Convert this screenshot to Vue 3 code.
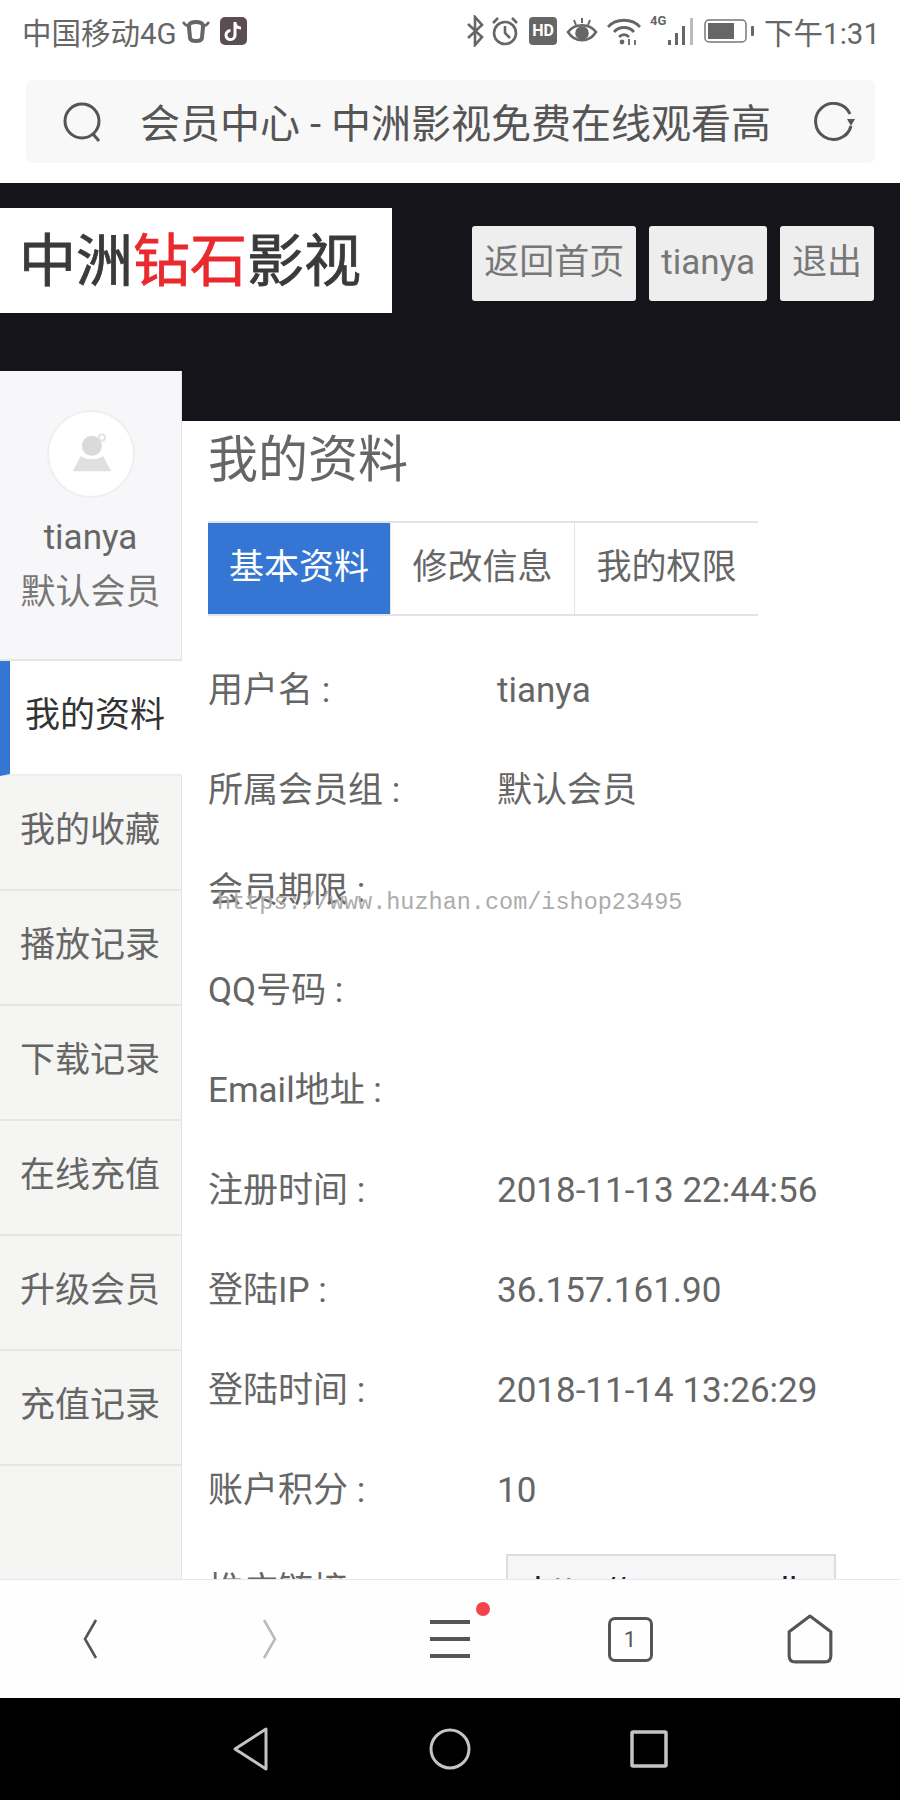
<script setup>
const menu = [
  { name: '我的资料', active: true },
  { name: '我的收藏' },
  { name: '播放记录' },
  { name: '下载记录' },
  { name: '在线充值' },
  { name: '升级会员' },
  { name: '充值记录' },
]
const tabs = ['基本资料', '修改信息', '我的权限']
const rows = [
  { label: '用户名 :', value: 'tianya' },
  { label: '所属会员组 :', value: '默认会员' },
  { label: '会员期限 :', value: '' },
  { label: 'QQ号码 :', value: '' },
  { label: 'Email地址 :', value: '' },
  { label: '注册时间 :', value: '2018-11-13 22:44:56' },
  { label: '登陆IP :', value: '36.157.161.90' },
  { label: '登陆时间 :', value: '2018-11-14 13:26:29' },
  { label: '账户积分 :', value: '10' },
]
</script>

<template>
  <div class="phone">
    <div class="status">
      <div class="status-left">
        <span>中国移动4G</span>
        <svg class="ic-cow" width="28" height="28" viewBox="0 0 28 28" fill="none" stroke="#666" stroke-width="4">
          <path d="M7 8 C9 4 19 4 21 8 C21 14 20 18 20 21 C19 25 9 25 8 21 C8 18 7 14 7 8 Z" />
          <path d="M1 5 C3 8 4 9 7 9 M27 5 C25 8 24 9 21 9" stroke-width="2.5" />
        </svg>
        <svg class="ic-tiktok" width="27" height="28" viewBox="0 0 27 28">
          <rect width="27" height="28" rx="5" fill="#5c4c54" />
          <path d="M15 5 V18 A4.5 4.5 0 1 1 10.500 13.600 M15 6 C15.500 9 18 11 21 11" fill="none" stroke="#fff" stroke-width="3" />
        </svg>
      </div>
      <div class="status-right">
        <svg class="ic-bt" width="20" height="32" viewBox="0 0 20 32" fill="none" stroke="#666" stroke-width="2.600">
          <path d="M3 9 L17 22 L10 30 V2 L17 10 L3 23" />
        </svg>
        <svg width="30" height="30" viewBox="0 0 30 30" fill="none" stroke="#666" stroke-width="2.600">
          <circle cx="15" cy="17" r="11" />
          <path d="M15 10 V17 L20 22 M3 7 L8 2 M27 7 L22 2" />
        </svg>
        <div class="ic-hd">HD</div>
        <svg width="32" height="28" viewBox="0 0 32 28" fill="none" stroke="#666" stroke-width="2.600">
          <path d="M2 15 C9 6 23 6 30 15 C23 26 9 26 2 15 Z" />
          <circle cx="16" cy="16" r="5.500" fill="#666" />
          <path d="M16 1 V6 M8 3 L10 8 M24 3 L22 8" stroke-width="2" />
        </svg>
        <svg width="34" height="30" viewBox="0 0 34 30" fill="none" stroke="#666" stroke-width="2.800">
          <path d="M1 11 C9 2 25 2 33 11 M7 16 C12 10 22 10 27 16 M12 21 C15 18 19 18 22 21" />
          <circle cx="15" cy="26" r="2.400" fill="#666" stroke="none" />
          <path d="M22 23 V29 M28 24 V29" stroke-width="1.800" />
        </svg>
        <div class="signal">
          <span class="net">4G</span>
          <svg width="28" height="30" viewBox="0 0 28 30">
            <rect x="0" y="24" width="3" height="5" fill="#666" />
            <rect x="7" y="17" width="3" height="12" fill="#666" />
            <rect x="14" y="10" width="3" height="19" fill="#666" />
            <rect x="22" y="2" width="3" height="27" fill="#bbb" />
          </svg>
        </div>
        <svg class="ic-battery" width="52" height="26" viewBox="0 0 52 26" fill="none">
          <rect x="1" y="2" width="41" height="22" rx="4" stroke="#777" stroke-width="1.500" />
          <rect x="4" y="5" width="26" height="16" fill="#666" />
          <rect x="47" y="8" width="3" height="10" rx="1" fill="#666" />
        </svg>
        <span>下午1:31</span>
      </div>
    </div>

    <div class="urlbar">
      <svg width="42" height="42" viewBox="0 0 42 42" fill="none" stroke="#555" stroke-width="3">
        <circle cx="20" cy="20" r="17" />
        <path d="M31 33 L37 40" />
      </svg>
      <div class="url-text">会员中心 - 中洲影视免费在线观看高</div>
      <svg width="44" height="40" viewBox="0 0 44 40" fill="none" stroke="#555" stroke-width="3">
        <path d="M38 12 A18 18 0 1 0 39 24" />
        <path d="M35 17 L43 17 L39 24 Z" fill="#555" stroke="none" />
      </svg>
    </div>

    <header class="site-head">
      <div class="logo">中洲<em>钻石</em>影视</div>
      <nav class="head-btns">
        <a class="btn">返回首页</a>
        <a class="btn">tianya</a>
        <a class="btn">退出</a>
      </nav>
    </header>

    <div class="main">
      <aside class="side">
        <div class="profile">
          <div class="avatar">
            <svg width="44" height="42" viewBox="0 0 48 46">
              <circle cx="25" cy="14" r="11" fill="#dadada" />
              <circle cx="36" cy="5" r="3.500" fill="none" stroke="#e2e2e2" stroke-width="2" />
              <path d="M13 25 C17 30 33 30 37 25 L46 42 H4 Z" fill="#e0e0e0" />
            </svg>
          </div>
          <div class="uname">tianya</div>
          <div class="ugroup">默认会员</div>
        </div>
        <div v-for="m in menu" :key="m.name" :class="['side-item', m.active ? 'on' : '']">{{ m.name }}</div>
      </aside>

      <section class="content">
        <h1 class="title">我的资料</h1>
        <div class="tabs">
          <div v-for="(t, i) in tabs" :key="t" :class="['tab', i === 0 ? 'on' : '']">{{ t }}</div>
        </div>
        <div class="info">
          <div v-for="r in rows" :key="r.label" class="row">
            <div class="label">{{ r.label }}</div>
            <div class="value">{{ r.value }}</div>
          </div>
          <div class="row">
            <div class="label">推广链接 :</div>
            <div class="link-box">http://www.zzz.dl</div>
          </div>
        </div>
      </section>
    </div>

    <div class="toolbar">
      <svg width="24" height="42" viewBox="0 0 24 42" fill="none" stroke="#555" stroke-width="2.600">
        <path d="M18 2 L7 21 L18 40" />
      </svg>
      <svg width="24" height="42" viewBox="0 0 24 42" fill="none" stroke="#bbb" stroke-width="2.600">
        <path d="M6 2 L17 21 L6 40" />
      </svg>
      <div class="tb-menu">
        <span></span><span></span><span></span>
        <i class="dot"></i>
      </div>
      <div class="tb-tab">1</div>
      <svg width="50" height="50" viewBox="0 0 48 48" fill="none" stroke="#555" stroke-width="3">
        <path d="M24 2 L44 17 V40 Q44 46 38 46 H10 Q4 46 4 40 V17 Z" stroke-linejoin="round" />
      </svg>
    </div>

    <div class="softkeys">
      <svg width="38" height="44" viewBox="0 0 38 44" fill="none" stroke="#c4c4c4" stroke-width="3">
        <path d="M34 2 V42 L3 22 Z" stroke-linejoin="round" />
      </svg>
      <svg width="44" height="44" viewBox="0 0 44 44" fill="none" stroke="#c4c4c4" stroke-width="3">
        <circle cx="22" cy="22" r="19" />
      </svg>
      <svg width="38" height="38" viewBox="0 0 38 38" fill="none" stroke="#c4c4c4" stroke-width="3.500">
        <rect x="2" y="2" width="34" height="34" rx="1" />
      </svg>
    </div>

    <div class="watermark">https://www.huzhan.com/ishop23495</div>
  </div>
</template>

<style>
html, body { margin: 0; background: #fff; }
</style>

<style scoped>
.phone {
  position: relative;
  width: 900px;
  height: 1800px;
  overflow: hidden;
  display: flex;
  flex-direction: column;
  background: #fff;
  color: #666;
  font-family: Roboto, "Noto Sans CJK SC", sans-serif;
}

.status {
  height: 62px;
  flex: none;
  display: flex;
  justify-content: space-between;
  align-items: center;
  padding: 0 20px 0 22px;
  font-size: 29.500px;
  color: #666;
}
.status-left, .status-right { display: flex; align-items: center; }
.ic-cow { margin-left: 5px; }
.ic-tiktok { margin-left: 10px; }
.status-right { gap: 9px; }
.ic-bt { margin-right: -4px; }
.ic-hd {
  width: 28px;
  height: 28px;
  background: #666;
  border-radius: 4px;
  color: #fff;
  font-size: 16px;
  font-weight: 700;
  line-height: 28px;
  text-align: center;
}
.signal { position: relative; width: 46px; height: 30px; }
.signal svg { position: absolute; right: 0; top: 0; }
.net { position: absolute; left: 0; top: -3px; font-size: 13px; font-weight: 700; line-height: 16px; }
.ic-battery { margin-left: -1px; margin-right: -1px; }

.urlbar {
  flex: none;
  margin: 18px 25px 20px 26px;
  height: 83px;
  display: flex;
  align-items: center;
  padding: 0 19px 0 36px;
  background: #f8f8f9;
  border-radius: 6px;
}
.url-text {
  flex: 1;
  margin-left: 36px;
  padding-bottom: 2px;
  font-size: 40px;
  color: #555;
  white-space: nowrap;
  overflow: hidden;
}

.site-head {
  flex: none;
  height: 188px;
  box-sizing: border-box;
  display: flex;
  align-items: flex-start;
  padding: 25px 26px 0 0;
  background: #15141a;
}
.logo {
  width: 392px;
  height: 105px;
  box-sizing: border-box;
  padding-left: 19px;
  background: #fff;
  color: #3a3a3a;
  font-size: 57px;
  font-weight: 400;
  -webkit-text-stroke: 0.8px currentColor;
  line-height: 108px;
  white-space: nowrap;
}
.logo em { font-style: normal; color: #e8292e; }
.head-btns { margin-left: auto; margin-top: 18px; display: flex; gap: 13px; }
.btn {
  height: 75px;
  box-sizing: border-box;
  padding: 0 12px 2px;
  display: flex;
  align-items: center;
  background: #eeeeee;
  border-radius: 3px;
  color: #777;
  font-size: 35px;
  line-height: 48px;
  white-space: nowrap;
}

.main {
  flex: 1;
  min-height: 0;
  display: flex;
  background: #15141a;
}
.side {
  width: 182px;
  flex: none;
  box-sizing: border-box;
  background: #f5f5f3;
  border-right: 1px solid #e4e4e6;
}
.profile {
  height: 290px;
  box-sizing: border-box;
  padding-top: 39px;
  background: #f7f7f9;
  border-bottom: 2px solid #e6e6e6;
  text-align: center;
  font-size: 35px;
}
.avatar {
  width: 88px;
  height: 88px;
  margin: 0 auto 16px;
  display: flex;
  align-items: center;
  justify-content: center;
  background: #fff;
  border: 2px solid #efefef;
  border-radius: 50%;
  box-sizing: border-box;
}
.uname { height: 48px; line-height: 48px; color: #666; }
.ugroup { margin-top: 7px; height: 48px; line-height: 48px; color: #777; }
.side-item {
  height: 115px;
  box-sizing: border-box;
  padding: 0 0 4px 20px;
  display: flex;
  align-items: center;
  border-bottom: 2px solid #e6e6e6;
  font-size: 35px;
  line-height: 48px;
  color: #666;
  white-space: nowrap;
}
.side-item.on {
  padding-left: 15px;
  width: 182px;
  background: #fff;
  border-left: 10px solid #3575d3;
  border-bottom-color: #eee;
  color: #333;
}

.content {
  flex: 1;
  min-width: 0;
  margin-top: 50px;
  padding: 0 0 0 26px;
  background: #fff;
}
.title {
  margin: 0;
  padding-top: 6px;
  height: 100px;
  box-sizing: border-box;
  font-size: 50px;
  font-weight: 400;
  line-height: 66px;
  color: #666;
}
.tabs {
  width: 550px;
  height: 95px;
  box-sizing: border-box;
  display: flex;
  border-top: 2px solid #e3e3e8;
  border-bottom: 2px solid #e3e3e8;
}
.tab {
  width: 184px;
  box-sizing: border-box;
  padding-bottom: 2px;
  display: flex;
  align-items: center;
  justify-content: center;
  border-left: 1px solid #e3e3e8;
  font-size: 35px;
  line-height: 48px;
  color: #666;
  white-space: nowrap;
}
.tab.on { width: 182px; background: #3575d3; color: #fff; border-left: 0; }

.info { margin-top: 25px; }
.row {
  height: 100px;
  display: flex;
  align-items: center;
  font-size: 35px;
  line-height: 48px;
  color: #666;
}
.label { width: 289px; flex: none; white-space: nowrap; }
.value { white-space: nowrap; }
.link-box {
  width: 330px;
  height: 84px;
  margin: 10px 0 0 9px;
  padding: 0 0 15px 26px;
  box-sizing: border-box;
  display: flex;
  align-items: center;
  background: #f6f6f8;
  border: 2px solid #ddd;
  color: #222;
  font-size: 34px;
  white-space: nowrap;
  overflow: hidden;
}

.toolbar {
  flex: none;
  height: 119px;
  position: relative;
  z-index: 1;
  box-sizing: border-box;
  display: grid;
  grid-template-columns: repeat(5, 1fr);
  justify-items: center;
  align-items: center;
  background: #fefefe;
  border-top: 1px solid #e8e8e8;
}
.tb-menu {
  position: relative;
  width: 40px;
  height: 38px;
  display: flex;
  flex-direction: column;
  justify-content: space-between;
}
.tb-menu span { height: 4px; background: #555; }
.dot {
  position: absolute;
  right: -20px;
  top: -18px;
  width: 14px;
  height: 14px;
  border-radius: 50%;
  background: #f0454a;
}
.tb-tab {
  width: 45px;
  height: 45px;
  box-sizing: border-box;
  display: flex;
  align-items: center;
  justify-content: center;
  border: 3px solid #555;
  border-radius: 7px;
  font-size: 22px;
  color: #555;
}

.softkeys {
  flex: none;
  height: 102px;
  position: relative;
  z-index: 1;
  display: flex;
  align-items: center;
  justify-content: center;
  gap: 158px;
  background: #000;
}

.watermark {
  position: absolute;
  left: 217px;
  top: 888px;
  font-family: "Liberation Mono", monospace;
  font-size: 23.500px;
  line-height: 30px;
  color: #acacac;
  white-space: nowrap;
}
</style>
